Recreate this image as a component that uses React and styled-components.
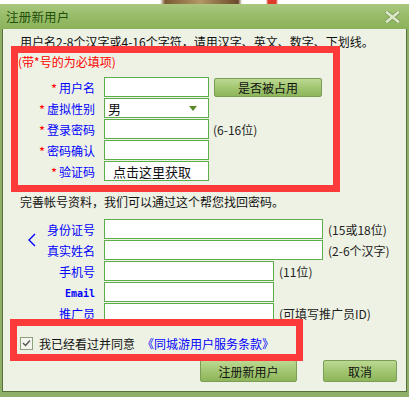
import React from 'react';
import styled, { createGlobalStyle } from 'styled-components';

const GlobalStyle = createGlobalStyle`
  html, body {
    margin: 0;
    padding: 0;
    background: #ffffff;
  }
  body {
    font-family: "Noto Sans CJK SC", "DejaVu Sans", sans-serif;
    font-size: 12px;
    color: #111;
  }
`;

const Page = styled.div`
  width: 409px;
  height: 397px;
  overflow: hidden;
  display: flex;
  flex-direction: column;
`;

const TopStrip = styled.div`
  height: 4px;
  background: linear-gradient(90deg, #fff 0, #fff 160px, #7a5a34 165px, #b39764 200px, #6b4a2a 238px, #fff 242px, #fff 266px, #e23a2a 268px, #e23a2a 276px, #fff 278px);
`;

const Dialog = styled.div`
  flex: 1;
  display: flex;
  flex-direction: column;
  background: #8fae68;
  padding: 0 2px 5px 2px;
`;

const TitleBar = styled.div`
  height: 25px;
  margin: 0 -2px;
  display: flex;
  align-items: center;
  justify-content: space-between;
  padding: 0 9px 0 6px;
  background: linear-gradient(180deg, #a9c87f 0%, #97bb68 50%, #8cb25b 100%);
`;

const Title = styled.span`
  color: #1f500a;
  font-size: 12.5px;
  letter-spacing: 0.2px;
`;

const Panel = styled.div`
  position: relative;
  flex: 1;
  display: flex;
  flex-direction: column;
  background: #eef2e4;
  border: 1px solid #55723a;
  border-top: none;
  padding: 6px 0 9px 0;
`;

const Note = styled.div`
  line-height: 14px;
  padding-left: ${p => p.$indent || 17}px;
  margin-top: ${p => p.$top || 0}px;
  color: ${p => p.$red ? '#f00' : '#111'};
`;

const Form = styled.div`
  display: grid;
  grid-template-columns: 92px 1fr;
  column-gap: 9px;
  row-gap: 1px;
  margin-top: ${p => p.$top}px;
`;

const Label = styled.div`
  height: 20px;
  display: flex;
  align-items: center;
  justify-content: flex-end;
  color: #0000ff;
`;

const Star = styled.span`
  color: #f00;
  font-size: 13px;
  margin-right: 2px;
  margin-top: 2px;
`;

const EmailText = styled.span`
  font-family: "DejaVu Sans Mono", "Liberation Mono", monospace;
  font-weight: bold;
  font-size: 10px;
  margin-top: 2px;
`;

const Cell = styled.div`
  display: flex;
  align-items: center;
  gap: ${p => p.$gap || 5}px;
`;

const Field = styled.div`
  box-sizing: border-box;
  width: ${p => p.$w}px;
  height: 20px;
  background: #fff;
  border: 1px solid #5cae4a;
  display: flex;
  align-items: center;
  padding-left: ${p => p.$pad || 3}px;
  color: #111;
  font-size: 13px;
`;

const Arrow = styled.span`
  margin-left: auto;
  margin-right: 11px;
  width: 0;
  height: 0;
  border-left: 4px solid transparent;
  border-right: 4px solid transparent;
  border-top: 5px solid #5b8a2a;
`;

const Hint = styled.span`
  color: #222;
  white-space: nowrap;
`;

const GreenButton = styled.div`
  box-sizing: border-box;
  width: ${p => p.$w}px;
  height: ${p => p.$h || 20}px;
  display: flex;
  align-items: center;
  justify-content: center;
  border: 1px solid #7c9d57;
  border-radius: 2px;
  background: linear-gradient(180deg, #bcd993 0%, #a4c874 45%, #8db55a 100%);
  color: #111;
  font-size: 12px;
`;

const AgreeRow = styled.div`
  display: flex;
  align-items: center;
  padding-left: 17px;
  margin-top: 13px;
  height: 14px;
`;

const Check = styled.span`
  box-sizing: border-box;
  width: 13px;
  height: 13px;
  border: 1px solid #8e9e80;
  background: #f4f6ee;
  display: flex;
  align-items: center;
  justify-content: center;
  margin-right: 6px;
`;

const Agree = styled.span`
  color: #111;
  font-size: 12px;
`;

const Terms = styled.span`
  color: #0000ff;
  margin-left: 7px;
  font-size: 12px;
`;

const Actions = styled.div`
  display: flex;
  justify-content: flex-end;
  gap: 26px;
  padding-right: 9px;
  margin-top: 10px;
`;

const RedBox = styled.div`
  position: absolute;
  left: ${p => p.$x}px;
  top: ${p => p.$y}px;
  width: ${p => p.$w}px;
  height: ${p => p.$h}px;
  box-sizing: border-box;
  border: 7px solid #fd3a3a;
  pointer-events: none;
`;

const Chevron = styled.svg`
  position: absolute;
  left: 24px;
  top: 204px;
`;

function CloseIcon() {
  return (
    <svg width="15" height="12" viewBox="0 0 15 12">
      <path d="M2 1.5 L13 10.5 M13 1.5 L2 10.5" stroke="#7f9d5c" strokeWidth="4.5" strokeLinecap="square" />
      <path d="M2 1.5 L13 10.5 M13 1.5 L2 10.5" stroke="#dbe7c8" strokeWidth="2.6" strokeLinecap="square" />
    </svg>
  );
}

const required = [
  { label: '用户名', field: <Field $w={105} />, extra: <GreenButton $w={108} $h={19}>是否被占用</GreenButton>, gap: 5 },
  { label: '虚拟性别', field: <Field $w={105}>男<Arrow /></Field> },
  { label: '登录密码', field: <Field $w={105} />, extra: <Hint>(6-16位)</Hint>, gap: 4 },
  { label: '密码确认', field: <Field $w={105} /> },
  { label: '验证码', field: <Field $w={105} $pad={8}>点击这里获取</Field> },
];

const optional = [
  { label: '身份证号', w: 219, hint: '(15或18位)' },
  { label: '真实姓名', w: 219, hint: '(2-6个汉字)' },
  { label: '手机号', w: 170, hint: '(11位)' },
  { label: 'Email', w: 170, mono: true },
  { label: '推广员', w: 170, hint: '(可填写推广员ID)' },
];

export default function App() {
  return (
    <Page>
      <GlobalStyle />
      <TopStrip />
      <Dialog>
        <TitleBar>
          <Title>注册新用户</Title>
          <CloseIcon />
        </TitleBar>
        <Panel>
          <Note>用户名2-8个汉字或4-16个字符，请用汉字、英文、数字、下划线。</Note>
          <Note $red $indent={15} $top={6}>(带*号的为必填项)</Note>
          <Form $top={8}>
            {required.map(r => (
              <React.Fragment key={r.label}>
                <Label><Star>*</Star>{r.label}</Label>
                <Cell $gap={r.gap}>
                  {r.field}
                  {r.extra}
                </Cell>
              </React.Fragment>
            ))}
          </Form>
          <Note $top={14}>完善帐号资料，我们可以通过这个帮您找回密码。</Note>
          <Form $top={10}>
            {optional.map(r => (
              <React.Fragment key={r.label}>
                <Label>{r.mono ? <EmailText>{r.label}</EmailText> : r.label}</Label>
                <Cell>
                  <Field $w={r.w} />
                  {r.hint && <Hint>{r.hint}</Hint>}
                </Cell>
              </React.Fragment>
            ))}
          </Form>
          <AgreeRow>
            <Check>
              <svg width="9" height="8" viewBox="0 0 9 8">
                <path d="M1 4 L3.5 6.5 L8 1.5" fill="none" stroke="#555" strokeWidth="1.4" />
              </svg>
            </Check>
            <Agree>我已经看过并同意</Agree>
            <Terms>《同城游用户服务条款》</Terms>
          </AgreeRow>
          <Actions>
            <GreenButton $w={97} $h={22}>注册新用户</GreenButton>
            <GreenButton $w={74} $h={22}>取消</GreenButton>
          </Actions>
          <Chevron width="10" height="14" viewBox="0 0 10 14">
            <path d="M8 1 L2 7 L8 13" fill="none" stroke="#0000ff" strokeWidth="1.4" />
          </Chevron>
          <RedBox $x={8} $y={17} $w={329} $h={146} />
          <RedBox $x={7} $y={290} $w={293} $h={42} />
        </Panel>
      </Dialog>
    </Page>
  );
}
